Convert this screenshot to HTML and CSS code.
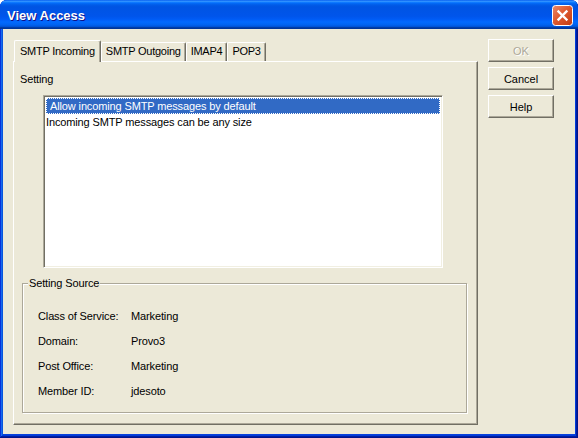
FILE: index.html
```html
<!DOCTYPE html>
<html lang="en">
<head>
    <meta charset="UTF-8">
    <title>View Access</title>
    <link rel="stylesheet" href="styles.css">
</head>
<body>
    <div class="window">
        <div class="titlebar">
            <span class="title">View Access</span>
            <div class="close">
                <svg width="21" height="21" viewBox="0 0 21 21">
                    <defs>
                        <linearGradient id="closeGrad" x1="0" y1="0" x2="1" y2="1">
                            <stop offset="0" stop-color="#ec8a6a"/>
                            <stop offset="0.45" stop-color="#df5a30"/>
                            <stop offset="1" stop-color="#c23a10"/>
                        </linearGradient>
                    </defs>
                    <rect x="0.5" y="0.5" width="20" height="20" rx="3" fill="url(#closeGrad)" stroke="#ffffff"/>
                    <path d="M6.5 6.5 L14.5 14.5 M14.5 6.5 L6.5 14.5" stroke="#ffffff" stroke-width="2.4" stroke-linecap="square"/>
                </svg>
            </div>
        </div>

        <div class="client">
            <div class="tabs-area">
                <div class="tabstrip">
                    <div class="tab active">SMTP Incoming</div>
                    <div class="tab">SMTP Outgoing</div>
                    <div class="tab">IMAP4</div>
                    <div class="tab">POP3</div>
                </div>
                <div class="panel">
                    <div class="label">Setting</div>
                    <div class="listbox">
                        <div class="item selected">Allow incoming SMTP messages by default</div>
                        <div class="item">Incoming SMTP messages can be any size</div>
                    </div>
                    <div class="group">
                        <span class="group-title">Setting Source</span>
                        <div class="info">
                            <span>Class of Service:</span><span>Marketing</span>
                            <span>Domain:</span><span>Provo3</span>
                            <span>Post Office:</span><span>Marketing</span>
                            <span>Member ID:</span><span>jdesoto</span>
                        </div>
                    </div>
                </div>
            </div>

            <div class="buttons">
                <button class="btn" disabled>OK</button>
                <button class="btn">Cancel</button>
                <button class="btn">Help</button>
            </div>
        </div>
    </div>
</body>
</html>
```

FILE: styles.css
```css
* {
    margin: 0;
    padding: 0;
    box-sizing: border-box;
}

body {
    font-family: 'Liberation Sans', Arial, sans-serif;
    font-size: 11px;
    letter-spacing: -0.13px;
    color: #000000;
    background: #ffffff;
}

.window {
    width: 578px;
    height: 438px;
    display: flex;
    flex-direction: column;
    background: #0842dc;
    border-radius: 7px 7px 0 0;
    padding: 0 3px 4px 3px;
    box-shadow:
        inset -1px -1px #00138c,
        inset 1px 0 #0831d9,
        inset -2px -2px #001ea0,
        inset 2px 0 #166aee,
        inset -3px -3px #003bda,
        inset 3px 0 #0855dd;
}

.titlebar {
    height: 29px;
    margin: 0 -3px;
    display: flex;
    align-items: center;
    justify-content: space-between;
    padding: 0 5px 0 7px;
    border-radius: 7px 7px 0 0;
    background: linear-gradient(to bottom,
        #0058ee 0%, #3593ff 4%, #288eff 6%, #127dff 8%, #036ffc 10%,
        #0262ee 14%, #0057e5 20%, #0054e3 24%, #0055eb 56%, #005bf5 66%,
        #026afe 76%, #0062ef 86%, #0052d6 92%, #0040ab 94%, #003092 100%);
}

.title {
    font-family: 'Liberation Sans', Arial, sans-serif;
    font-weight: bold;
    font-size: 13px;
    letter-spacing: 0;
    color: #ffffff;
    text-shadow: 1px 1px #0f1089;
    margin-top: 1px;
}

.close {
    width: 21px;
    height: 21px;
    margin-top: 2px;
}

.close svg {
    display: block;
}

.client {
    flex: 1;
    background: #ece9d8;
    display: flex;
    gap: 10px;
    padding: 10px 0 0 10px;
}

.tabs-area {
    width: 465px;
    display: flex;
    flex-direction: column;
}

.tabstrip {
    height: 22px;
    display: flex;
    align-items: flex-end;
    padding-left: 1px;
    position: relative;
    z-index: 1;
}

.tab {
    height: 19px;
    padding: 0 4px;
    line-height: 17px;
    letter-spacing: -0.25px;
    border: 1px solid #ffffff;
    border-bottom: none;
    border-right: 1px solid #716f64;
    box-shadow: inset -1px 0 #aca899;
    border-radius: 2px 2px 0 0;
    background: #ece9d8;
    white-space: nowrap;
}

.tab.active {
    height: 22px;
    padding: 0 5px;
    margin-bottom: -1px;
    line-height: 20px;
}

.panel {
    height: 364px;
    border: 1px solid #ffffff;
    border-right-color: #716f64;
    border-bottom-color: #716f64;
    box-shadow: inset -1px -1px #aca899;
    padding: 11px 0 0 6px;
}

.label {
    line-height: 13px;
}

.listbox {
    width: 400px;
    height: 173px;
    margin: 9px 0 0 23px;
    background: #ffffff;
    border: 1px solid #aca899;
    border-right-color: #ffffff;
    border-bottom-color: #ffffff;
    box-shadow: inset 1px 1px #716f64, inset -1px -1px #f1efe2;
    padding: 2px 2px 0 2px;
}

.item {
    height: 16px;
    line-height: 16px;
    white-space: nowrap;
}

.item.selected {
    background: #316ac5;
    color: #ffffff;
    padding-left: 4px;
    outline: 1px dotted #ffffff;
    outline-offset: -1px;
}

.group {
    position: relative;
    width: 445px;
    height: 130px;
    margin: 15px 0 0 2px;
    border: 1px solid #aca899;
    box-shadow: 1px 1px #ffffff, inset 1px 1px #ffffff;
    padding: 26px 0 0 15px;
}

.group-title {
    position: absolute;
    top: -7px;
    left: 5px;
    padding: 0 1px;
    line-height: 13px;
    background: #ece9d8;
}

.info {
    display: grid;
    grid-template-columns: 93px auto;
    grid-auto-rows: 13px;
    row-gap: 12px;
    line-height: 13px;
}

.buttons {
    display: flex;
    flex-direction: column;
    gap: 5px;
}

.btn {
    width: 66px;
    height: 23px;
    font-family: 'Liberation Sans', Arial, sans-serif;
    font-size: 11px;
    color: #000000;
    background: #ece9d8;
    border: 1px solid #ffffff;
    border-right-color: #716f64;
    border-bottom-color: #716f64;
    box-shadow: inset -1px -1px #aca899;
}

.btn:disabled {
    color: #aca899;
    text-shadow: 1px 1px #ffffff;
}
```
